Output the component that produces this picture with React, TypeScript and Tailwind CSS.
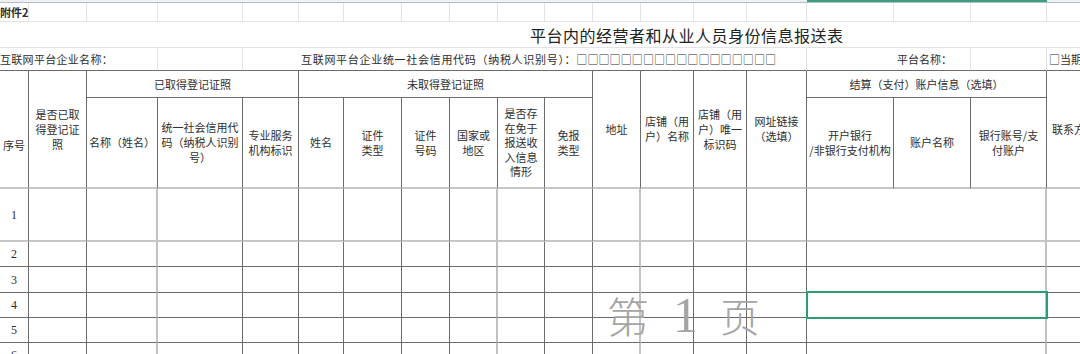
import React from "react";

const sans = "font-['Noto_Sans_CJK_SC',sans-serif]";

// column widths / row heights measured off the sheet
const grid =
  "grid grid-cols-[29px_58px_71px_85px_56px_45px_58px_48px_48px_47px_48px_48px_53px_53px_60px_87px_77px_76px_80px] grid-rows-[19px_26px_23px_27px_91px_53px_25px_26px_25px_25px_25px]";

const faint = "border-r border-b border-[#e3e3e3]";
const head = "border-r border-b border-[#6b6b6b]";
const headLast = "border-r border-b-2 border-r-[#6b6b6b] border-b-[#c6c6c6]";

function Cell({ className, children }: { className: string; children?: React.ReactNode }) {
  return <div className={`flex items-center justify-center text-center ${className}`}>{children}</div>;
}

function Lines({ lines }: { lines: string[] }) {
  return (
    <div className="leading-[15px]">
      {lines.map((l, i) => (
        <div key={i} className="whitespace-nowrap">
          {l}
        </div>
      ))}
    </div>
  );
}

function DataRow({ n, first }: { n: number; first: boolean }) {
  // vertical lines at 158, 498, 641 and 1047 show up lighter in the body
  const light = [2, 8, 11];
  const bottom = first ? "border-b-2 border-b-[#c6c6c6]" : "border-b border-b-[#6b6b6b]";
  return (
    <>
      {Array.from({ length: 15 }).map((_, i) => (
        <Cell
          key={i}
          className={`${bottom} ${
            light.includes(i) ? "border-r-2 border-r-[#c2c2c2]" : "border-r border-r-[#6b6b6b]"
          }`}
        >
          {i === 0 && <span className="font-['Liberation_Serif',serif] text-[12px]">{n}</span>}
        </Cell>
      ))}
      <Cell className={`col-span-3 ${bottom} border-r-2 border-r-[#c2c2c2]`} />
      <Cell className={`${bottom} border-r border-r-[#6b6b6b]`} />
    </>
  );
}

export default function App() {
  const squares = "□".repeat(18);

  return (
    <div className={`relative w-[1080px] h-[354px] overflow-hidden bg-white text-[#2e2e2e] text-[11px] ${sans}`}>
      {/* sheet header strip */}
      <div className="flex h-[3px] border-b border-[#b3bccb] bg-[#eef0f2]">
        <div className="w-[807px]" />
        <div className="w-[240px] bg-[#3d9d7c]" />
      </div>

      <div className={grid}>
        {/* row 1 */}
        <Cell className={`${faint} justify-start font-bold whitespace-nowrap`}>附件2</Cell>
        {Array.from({ length: 18 }).map((_, i) => (
          <Cell key={i} className={faint} />
        ))}

        {/* title */}
        <Cell className="col-span-full justify-start pl-[530px] border-b border-[#e3e3e3] text-[16px] tracking-[0.5px] text-[#222]">
          平台内的经营者和从业人员身份信息报送表
        </Cell>

        {/* info row */}
        <Cell className="col-span-3 justify-start border-r border-b border-r-[#e3e3e3] border-b-[#6b6b6b] whitespace-nowrap tracking-[0.3px]">
          互联网平台企业名称：
        </Cell>
        <Cell className="border-r border-b border-r-[#e3e3e3] border-b-[#6b6b6b]" />
        <Cell className="border-b border-b-[#6b6b6b]" />
        <Cell className="col-span-10 justify-start pl-[2px] border-r border-b border-r-[#e3e3e3] border-b-[#6b6b6b] whitespace-nowrap">
          <span className="tracking-[0.7px]">互联网平台企业统一社会信用代码（纳税人识别号）：</span>
          <span className="tracking-[0.1px]">{squares}</span>
        </Cell>
        <Cell className="border-b border-b-[#6b6b6b]" />
        <Cell className="justify-start pl-[3px] border-r border-b border-r-[#e3e3e3] border-b-[#6b6b6b] whitespace-nowrap">
          平台名称：
        </Cell>
        <Cell className="border-r border-b border-r-[#e3e3e3] border-b-[#6b6b6b]" />
        <Cell className="justify-start pl-[2px] border-b border-b-[#6b6b6b] whitespace-nowrap">□当期报送</Cell>

        {/* header row: groups */}
        <div className={`row-span-2 flex items-end justify-center pb-[34px] ${headLast}`}>序号</div>
        <Cell className={`row-span-2 ${headLast}`}>
          <Lines lines={["是否已取", "得登记证", "照"]} />
        </Cell>
        <Cell className={`col-span-3 ${head}`}>已取得登记证照</Cell>
        <Cell className={`col-span-6 ${head}`}>未取得登记证照</Cell>
        <Cell className={`row-span-2 ${headLast}`}>地址</Cell>
        <Cell className={`row-span-2 ${headLast}`}>
          <Lines lines={["店铺（用", "户）名称"]} />
        </Cell>
        <Cell className={`row-span-2 ${headLast}`}>
          <Lines lines={["店铺（用", "户）唯一", "标识码"]} />
        </Cell>
        <Cell className={`row-span-2 ${headLast}`}>
          <Lines lines={["网址链接", "（选填）"]} />
        </Cell>
        <Cell className={`col-span-3 ${head}`}>结算（支付）账户信息（选填）</Cell>
        <Cell className={`row-span-2 justify-start pl-[5px] whitespace-nowrap ${headLast}`}>联系方式</Cell>

        {/* header row: fields */}
        <Cell className={headLast}>名称（姓名）</Cell>
        <Cell className={headLast}>
          <Lines lines={["统一社会信用代", "码（纳税人识别", "号）"]} />
        </Cell>
        <Cell className={headLast}>
          <Lines lines={["专业服务", "机构标识"]} />
        </Cell>
        <Cell className={headLast}>姓名</Cell>
        <Cell className={headLast}>
          <Lines lines={["证件", "类型"]} />
        </Cell>
        <Cell className={headLast}>
          <Lines lines={["证件", "号码"]} />
        </Cell>
        <Cell className={headLast}>
          <Lines lines={["国家或", "地区"]} />
        </Cell>
        <Cell className={headLast}>
          <div className="leading-[14.5px]">
            {["是否存", "在免于", "报送收", "入信息", "情形"].map((l) => (
              <div key={l}>{l}</div>
            ))}
          </div>
        </Cell>
        <Cell className={headLast}>
          <Lines lines={["免报", "类型"]} />
        </Cell>
        <Cell className={headLast}>
          <Lines lines={["开户银行", "/非银行支付机构"]} />
        </Cell>
        <Cell className={headLast}>账户名称</Cell>
        <Cell className={headLast}>
          <Lines lines={["银行账号/支", "付账户"]} />
        </Cell>

        {[1, 2, 3, 4, 5, 6].map((n) => (
          <DataRow key={n} n={n} first={n === 1} />
        ))}
      </div>

      {/* selected cell */}
      <div className="absolute left-[806px] top-[291px] w-[242px] h-[28px] border-2 border-[#2f9e6f]" />

      {/* page watermark */}
      <div className="absolute left-[607px] top-[290px] flex items-center text-[#a4a4a4] pointer-events-none">
        <span className="text-[42px] leading-none font-light">第</span>
        <span className="ml-[24px] font-['Liberation_Serif',serif] text-[50px] leading-none">1</span>
        <span className="ml-[22px] text-[40px] leading-none font-light">页</span>
      </div>
    </div>
  );
}
